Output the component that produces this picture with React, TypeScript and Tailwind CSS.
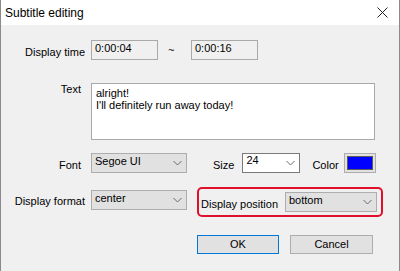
import React from "react";

const ui = { fontFamily: '"Liberation Sans", Arial, sans-serif' };

function Chevron() {
  return (
    <svg width="9" height="6" viewBox="0 0 9 6" className="shrink-0">
      <path d="M0.5 1 L4.5 5 L8.5 1" fill="none" stroke="#6b6b6b" strokeWidth="1" />
    </svg>
  );
}

type SelectProps = { value: string; width: string; white?: boolean };

function Select({ value, width, white }: SelectProps) {
  return (
    <div
      className={`flex h-[20px] ${width} items-center justify-between border pl-[3px] pr-[4px] ${
        white ? "border-[#7a7a7a] bg-white" : "border-[#adadad] bg-[#e1e1e1]"
      }`}
    >
      <span className={white ? "-mt-[5px]" : "-mt-[3px]"}>{value}</span>
      <Chevron />
    </div>
  );
}

function ReadOnlyBox({ value }: { value: string }) {
  return (
    <div className="h-[20px] w-[67px] border border-[#a9a9a9] bg-[#f0f0f0] pl-[3px] leading-[14px]">
      {value}
    </div>
  );
}

export default function App() {
  return (
    <div
      className="h-[271px] w-[400px] overflow-hidden whitespace-nowrap border-x border-[#8a8a8a] bg-[#f0f0f0] text-[11px] text-black"
      style={ui}
    >
      <div className="flex h-[25px] items-center justify-between bg-white pl-[4px] pr-[11px]">
        <span className="text-[12px]">Subtitle editing</span>
        <svg width="11" height="11" viewBox="0 0 11 11">
          <path d="M0.5 0.5 L10.5 10.5 M10.5 0.5 L0.5 10.5" stroke="#222" strokeWidth="1" />
        </svg>
      </div>

      <div className="flex flex-col pt-[15px]">
        <div className="flex h-[20px] items-center">
          <span className="mt-[5px] w-[85px] pr-[1px] text-right">Display time</span>
          <div className="ml-[5px] flex items-center">
            <ReadOnlyBox value="0:00:04" />
            <span className="mt-[1px] w-[33px] pl-[10px]">~</span>
            <ReadOnlyBox value="0:00:16" />
          </div>
        </div>

        <div className="mt-[23px] flex">
          <span className="w-[80px] text-right leading-[12px]">Text</span>
          <div className="ml-[10px] h-[57px] w-[284px] border border-[#a9a9a9] bg-white pl-[4px] pt-[3px] leading-[12px]">
            <div>alright!</div>
            <div>I'll definitely run away today!</div>
          </div>
        </div>

        <div className="mt-[13px] flex h-[20px] items-center">
          <span className="mt-[5px] w-[80px] text-right">Font</span>
          <div className="ml-[10px]">
            <Select value="Segoe UI" width="w-[96px]" />
          </div>
          <span className="ml-[26px] mt-[5px]">Size</span>
          <div className="ml-[8px]">
            <Select value="24" width="w-[58px]" white />
          </div>
          <span className="ml-[12px] mt-[5px]">Color</span>
          <div className="ml-[5px] h-[20px] w-[32px] border border-[#adadad] bg-[#e1e1e1] p-[2px]">
            <div className="h-full w-full border border-[#5a5a5a] bg-[#0000ff]" />
          </div>
        </div>

        <div className="mt-[14px] flex items-start">
          <div className="mt-[3px] flex h-[19px] items-center">
            <span className="mt-[4px] w-[85px] pr-[1px] text-right">Display format</span>
            <div className="ml-[5px]">
              <Select value="center" width="w-[96px]" />
            </div>
          </div>
          <div className="ml-[10px] flex h-[30px] w-[186px] items-center rounded-[5px] border-2 border-[#e0102a] pl-[2px]">
            <span className="mt-[4px] w-[84px]">Display position</span>
            <div>
              <Select value="bottom" width="w-[92px]" />
            </div>
          </div>
        </div>

        <div className="mt-[18px] flex pl-[196px]">
          <div className="flex h-[19px] w-[82px] items-center justify-center border border-[#0078d7] bg-[#e1e1e1]">OK</div>
          <div className="ml-[11px] flex h-[19px] w-[83px] items-center justify-center border border-[#adadad] bg-[#e1e1e1]">
            Cancel
          </div>
        </div>
      </div>
    </div>
  );
}
